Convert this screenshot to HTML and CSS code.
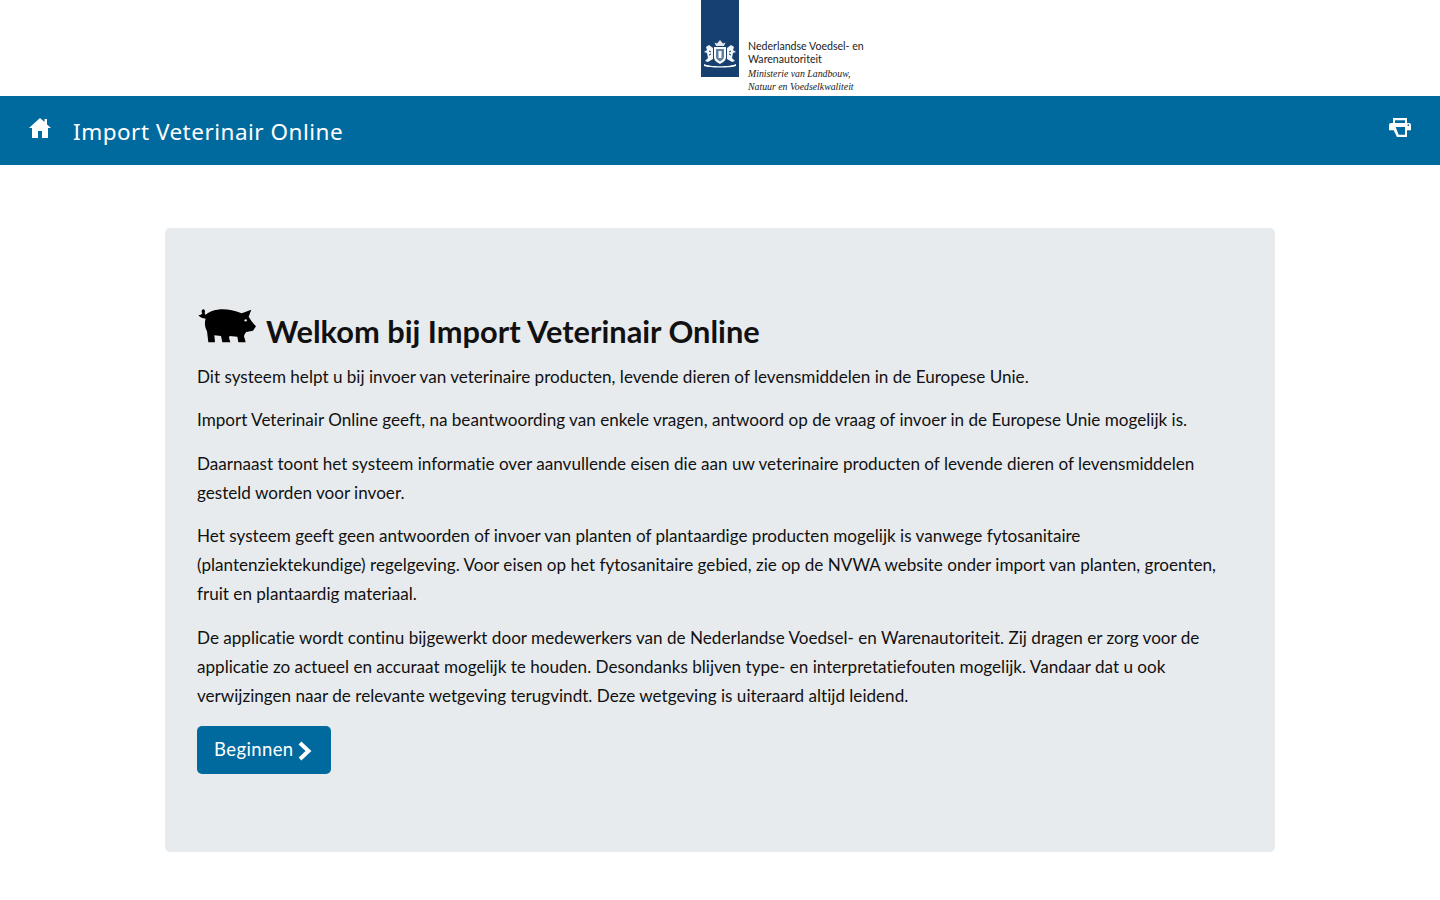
FILE: index.html

```html
<!DOCTYPE html>
<html lang="nl">
<head>
  <meta charset="UTF-8" />
  <meta name="viewport" content="width=device-width, initial-scale=1.0" />
  <title>Import Veterinair Online</title>
  <link rel="stylesheet" href="styles.css">
</head>
<body>
  <header class="logo-bar">
    <div class="logo">
      <div class="logo-flag">
        <svg class="crest" viewBox="0 0 34 29" width="34" height="29" aria-hidden="true">
          <path d="M13 7l-1.500-3.500 2.500 1L17 1l3 3.500 2.500-1L21 7z" fill="#dfe6ee"/>
          <path d="M11 8h12v10c0 4-3 5-6 7-3-2-6-3-6-7z" fill="#fff"/>
          <path d="M13 10h8v8c0 2-2 3-4 4.500-2-1.500-4-2.500-4-4.500z" fill="#5f7fa3"/>
          <path d="M15.500 12h3v7h-3z" fill="#fff"/>
          <path d="M10 9L6 6 3 8l1 3-3 2 3 1 1 5-3 3 3 1 5-3zM24 9l4-3 3 2-1 3 3 2-3 1-1 5 3 3-3 1-5-3z" fill="#f2f5f8"/>
          <path d="M6 12l2 1M6 16l2-1M28 12l-2 1M28 16l-2-1" stroke="#15406f" stroke-width="1"/>
          <path d="M1 25c5 3 27 3 32 0v2c-5 2-27 2-32 0z" fill="#fff"/>
        </svg>
      </div>
      <div class="logo-text">
        <div>Nederlandse Voedsel- en</div>
        <div>Warenautoriteit</div>
        <div class="logo-sub">Ministerie van Landbouw,</div>
        <div class="logo-sub">Natuur en Voedselkwaliteit</div>
      </div>
    </div>
  </header>

  <nav class="topbar">
    <div class="topbar-left">
      <svg class="icon-home" viewBox="0 0 22 20" width="22" height="20" aria-hidden="true">
        <path d="M11 0L0 10H3V20H9V13H13V20H19V10H22L18 6.400V1H15.500V4Z" fill="#fff"/>
      </svg>
      <span class="app-name">Import Veterinair Online</span>
    </div>
    <svg class="icon-print" viewBox="12 15 66 57" width="22" height="19" aria-hidden="true">
      <path fill-rule="evenodd" d="M24 15H66V30H72Q78 30 78 36V52H66V72H36L26 52H12V36Q12 30 18 30H24ZM30 22V30H60V22ZM32 42L41 65H60V42ZM70 34a2.500 2.500 0 1 0 .01 0Z" fill="#fff"/>
    </svg>
  </nav>

  <main class="card">
    <h1 class="title">
      <svg class="icon-pig" viewBox="24 39 180 111" width="60" height="37" aria-hidden="true">
        <path d="M50 62C70 45 110 38 158 58L187 47 179 68C185 78 192 88 201 97L192 110 172 114C168 118 166 122 165 127L170 145 148 145 145 128 122 126 120 131 124 145 100 145 96 126 76 124 78 145 58 145 54 112C47 100 46 85 50 74 42 74 32 70 28 64 34 64 38 62 40 58 36 54 38 47 43 46 48 47 49 53 47 57 48 60 49 61 50 62Z" fill="#000"/>
        <circle cx="170" cy="79" r="3.500" fill="#e8ebee"/>
      </svg>
      Welkom bij Import Veterinair Online
    </h1>
    <p>Dit systeem helpt u bij invoer van veterinaire producten, levende dieren of levensmiddelen in de Europese Unie.</p>
    <p>Import Veterinair Online geeft, na beantwoording van enkele vragen, antwoord op de vraag of invoer in de Europese Unie mogelijk is.</p>
    <p>Daarnaast toont het systeem informatie over aanvullende eisen die aan uw veterinaire producten of levende dieren of levensmiddelen gesteld worden voor invoer.</p>
    <p>Het systeem geeft geen antwoorden of invoer van planten of plantaardige producten mogelijk is vanwege fytosanitaire (plantenziektekundige) regelgeving. Voor eisen op het fytosanitaire gebied, zie op de NVWA website onder import van planten, groenten, fruit en plantaardig materiaal.</p>
    <p>De applicatie wordt continu bijgewerkt door medewerkers van de Nederlandse Voedsel- en Warenautoriteit. Zij dragen er zorg voor de applicatie zo actueel en accuraat mogelijk te houden. Desondanks blijven type- en interpretatiefouten mogelijk. Vandaar dat u ook verwijzingen naar de relevante wetgeving terugvindt. Deze wetgeving is uiteraard altijd leidend.</p>
    <a class="btn" href="#">Beginnen
      <svg class="icon-chevron" viewBox="0 0 16 20" width="16" height="20" aria-hidden="true">
        <path d="M3 2l8.500 8L3 18" fill="none" stroke="#fff" stroke-width="4"/>
      </svg>
    </a>
  </main>
</body>
</html>
```

FILE: styles.css

```css
body {
  margin: 0;
  font-family: Lato, sans-serif;
  font-variant-ligatures: none;
  color: #111;
  background: #fff;
}
.logo-bar {
  height: 96px;
  padding-left: 701px;
}
.logo {
  display: flex;
  gap: 9px;
}
.logo-flag {
  width: 38px;
  height: 77px;
  background: #15406f;
  display: flex;
  align-items: flex-end;
  justify-content: center;
  padding-bottom: 9px;
  box-sizing: border-box;
}
.logo-text {
  padding-top: 40px;
  font-size: 10.600px;
  line-height: 13.300px;
  color: #222;
  white-space: nowrap;
}
.logo-sub {
  font-family: "Liberation Serif", serif;
  font-style: italic;
  font-size: 9.800px;
}
.topbar {
  height: 69px;
  background: #006a9e;
  color: #fff;
  display: flex;
  align-items: center;
  justify-content: space-between;
  padding: 0 29px;
}
.topbar-left {
  display: flex;
  align-items: center;
  gap: 22px;
}
.app-name {
  font-family: "Noto Sans", sans-serif;
  font-size: 22.500px;
  letter-spacing: 0.5px;
  padding-top: 2px;
}
.icon-home {
  margin-top: -5px;
}
.icon-print {
  margin-top: -6px;
}
.card {
  width: 1110px;
  height: 624px;
  box-sizing: border-box;
  margin: 63px auto 0;
  padding: 80px 32px 0;
  background: #e8ebee;
  border-radius: 5px;
}
.title {
  margin: 0 0 5.700px;
  font-size: 30.800px;
  font-weight: 700;
  line-height: 48px;
  display: flex;
  align-items: center;
  gap: 9px;
}
.icon-pig {
  margin-top: -13px;
}
.card p {
  margin: 0 0 14.500px;
  font-size: 17.100px;
  line-height: 29px;
}
.btn {
  display: inline-flex;
  align-items: center;
  gap: 3px;
  height: 48px;
  padding: 0 18px 2px 17px;
  margin-top: 1.500px;
  box-sizing: border-box;
  border-radius: 5px;
  background: #006a9e;
  color: #fff;
  font-size: 18.500px;
  letter-spacing: 0.4px;
  text-decoration: none;
}
.icon-chevron {
  margin-top: 4px;
}
```
